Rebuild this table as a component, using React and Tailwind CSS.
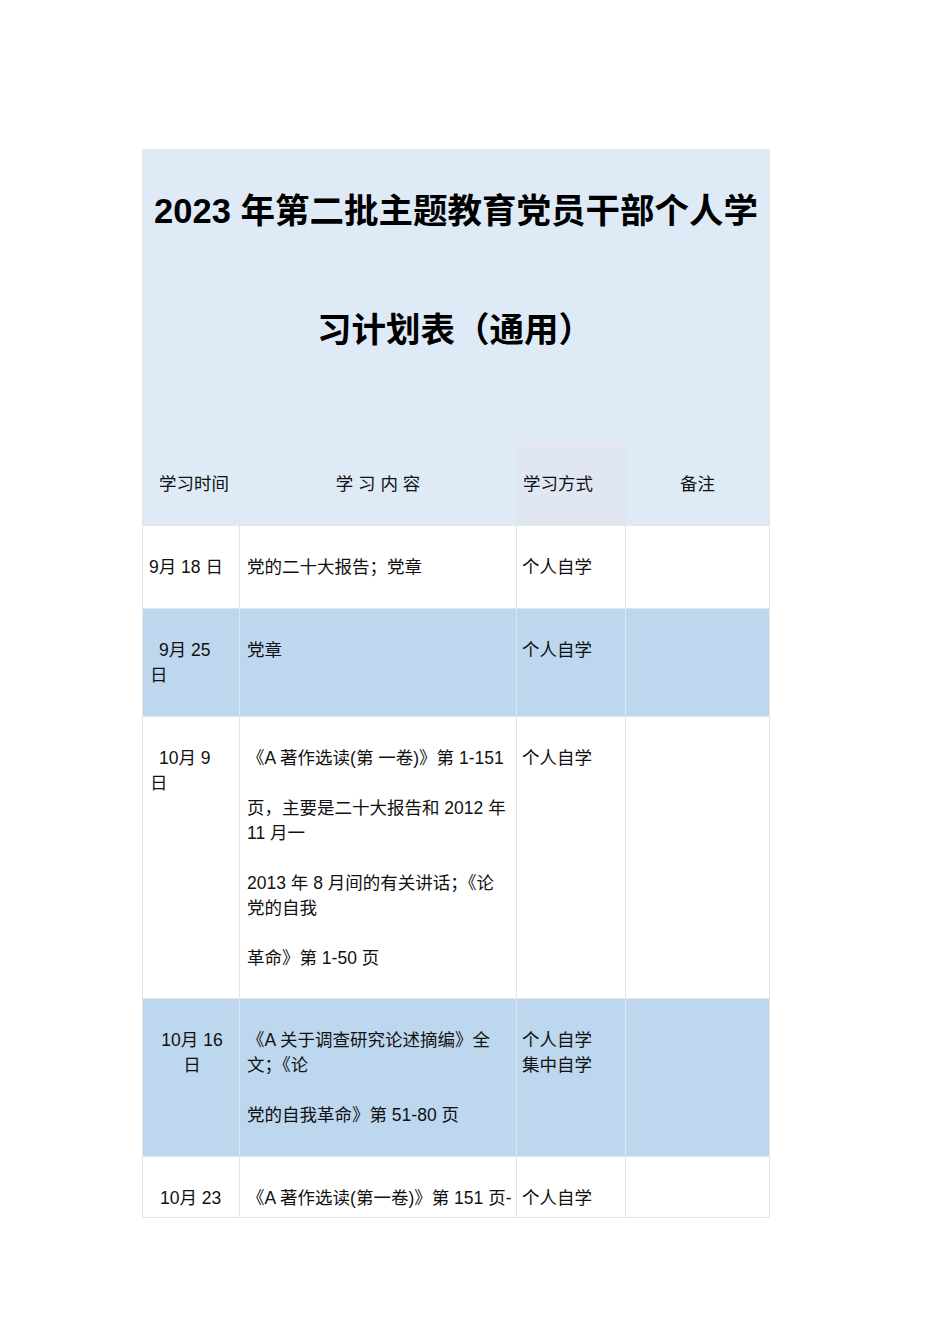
import React from "react";

const font = { fontFamily: '"Liberation Sans", "Noto Sans CJK SC", sans-serif' };

function Row({ h, bg, cells }) {
  return (
    <div className={`flex border-t border-[#e3e5e9] ${h} ${bg}`}>
      {cells.map((c, i) => (
        <div
          key={i}
          className={`${["w-[96px]", "w-[277px]", "w-[109px]", "flex-1"][i]} ${i > 0 ? "border-l border-[#e3e5e9]" : ""} ${c.cls || ""} pt-[29px] overflow-hidden`}
        >
          {c.content}
        </div>
      ))}
    </div>
  );
}

export default function App() {
  return (
    <div className="min-h-[1344px] w-[950px] bg-white pt-[149px] pl-[142px]" style={font}>
      <div className="w-[628px] border-x border-t border-[#e3e5e9] text-[17.5px] leading-[25px] text-[#111]">
        <div className="h-[292px] bg-[#deeaf6] pt-[2px] text-center text-[34.5px] font-bold leading-[119px] text-black">
          <div className="whitespace-nowrap">2023 年第二批主题教育党员干部个人学</div>
          <div className="pr-[2px]">习计划表（通用）</div>
        </div>
        <Row
          h="h-[83px]"
          bg="bg-[#deeaf6]"
          cells={[
            { cls: "pl-[16px]", content: "学习时间" },
            { cls: "text-center", content: "学 习 内 容" },
            { cls: "pl-[6px] bg-[#e0e7f2]", content: "学习方式" },
            { cls: "text-center", content: "备注" },
          ]}
        />
        <Row
          h="h-[83px]"
          bg="bg-white"
          cells={[
            { cls: "pl-[6px] whitespace-nowrap", content: "9月 18 日" },
            { cls: "pl-[7px]", content: "党的二十大报告；党章" },
            { cls: "pl-[5px]", content: "个人自学" },
            { content: "" },
          ]}
        />
        <Row
          h="h-[108px]"
          bg="bg-[#bdd7ee]"
          cells={[
            {
              cls: "pl-[7px]",
              content: (
                <>
                  <div className="pl-[9px] whitespace-nowrap">9月 25</div>
                  <div>日</div>
                </>
              ),
            },
            { cls: "pl-[7px]", content: "党章" },
            { cls: "pl-[5px]", content: "个人自学" },
            { content: "" },
          ]}
        />
        <Row
          h="h-[282px]"
          bg="bg-white"
          cells={[
            {
              cls: "pl-[7px]",
              content: (
                <>
                  <div className="pl-[9px] whitespace-nowrap">10月 9</div>
                  <div>日</div>
                </>
              ),
            },
            {
              cls: "pl-[7px] whitespace-nowrap",
              content: (
                <>
                  <div className="mb-[25px]">《A 著作选读(第 一卷)》第 1-151</div>
                  <div className="mb-[25px]">
                    页，主要是二十大报告和 2012 年<br />11 月一
                  </div>
                  <div className="mb-[25px]">
                    2013 年 8 月间的有关讲话；《论<br />党的自我
                  </div>
                  <div>革命》第 1-50 页</div>
                </>
              ),
            },
            { cls: "pl-[5px]", content: "个人自学" },
            { content: "" },
          ]}
        />
        <Row
          h="h-[158px]"
          bg="bg-[#bdd7ee]"
          cells={[
            {
              cls: "text-center pl-[2px]",
              content: (
                <>
                  <div className="whitespace-nowrap">10月 16</div>
                  <div>日</div>
                </>
              ),
            },
            {
              cls: "pl-[7px] whitespace-nowrap",
              content: (
                <>
                  <div className="mb-[25px]">
                    《A 关于调查研究论述摘编》全<br />文；《论
                  </div>
                  <div>党的自我革命》第 51-80 页</div>
                </>
              ),
            },
            {
              cls: "pl-[5px]",
              content: (
                <>
                  <div>个人自学</div>
                  <div>集中自学</div>
                </>
              ),
            },
            { content: "" },
          ]}
        />
        <div className="border-b border-[#e3e5e9]">
          <Row
            h="h-[61px]"
            bg="bg-white"
            cells={[
              { cls: "pl-[17px] whitespace-nowrap", content: "10月 23" },
              { cls: "pl-[7px] whitespace-nowrap", content: "《A 著作选读(第一卷)》第 151 页-" },
              { cls: "pl-[5px]", content: "个人自学" },
              { content: "" },
            ]}
          />
        </div>
      </div>
    </div>
  );
}
